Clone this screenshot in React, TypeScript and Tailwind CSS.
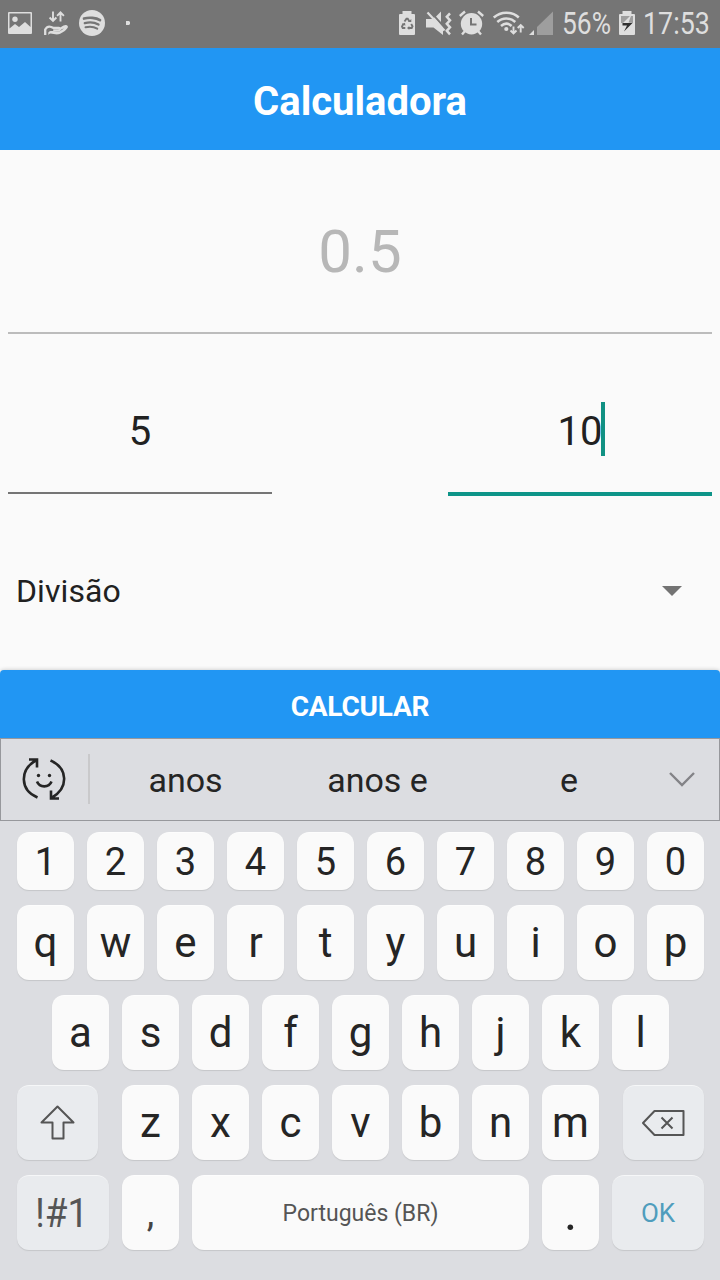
import React from "react";

const NUMBERS = "1234567890".split("");
const TOP = "qwertyuiop".split("");
const HOME = "asdfghjkl".split("");
const BOTTOM = "zxcvbnm".split("");

function Icon({ x, w, className = "", children }: { x: number; w: number; className?: string; children: React.ReactNode }) {
  return (
    <svg width={w} height={28} viewBox={`${x} 10 ${w} 28`} className={`shrink-0 ${className}`} fill="#dedede">
      {children}
    </svg>
  );
}

function StatusBar() {
  return (
    <header className="flex h-12 items-center bg-[#757575] pl-2 text-[#dedede]">
      <Icon x={8} w={24}>
        <path fillRule="evenodd" d="M9 12h22a1 1 0 0 1 1 1v20a1 1 0 0 1-1 1H9a1 1 0 0 1-1-1V13a1 1 0 0 1 1-1zm.5 1.500V28.500l5.500-4.500 4 3 6-5 5.500 5V13.500z" />
        <circle cx="15" cy="19.300" r="2.700" />
      </Icon>
      <Icon x={43} w={26} className="ml-[11px]">
        <g fill="none" stroke="#dedede" strokeWidth="1.900">
          <path d="M53 11.500v9.500M49.600 17.500l3.400 3.500 3.400-3.500M60.500 21.500V13M57.100 15.800l3.400-3.500 3.400 3.500" />
          <path strokeWidth="2.300" d="M45.200 35V29.500c1.500-2.500 4-3.200 6-2.500l2.500 1h5c1.800.3 1.300 2.800-.5 2.700h-5" />
        </g>
        <path d="M58.500 28.500l5-3c3-1.500 5.500.3 4 2.500-2 3-6.500 5.700-9 6.300-3 .5-5.500-.8-8-.8-1 0-1.700.8-2.200 1.500v-2.500c2-2.800 6-1 9.200-.6 2.500-.2 4.500-2.300 6.500-3.700l-4 2z" />
      </Icon>
      <Icon x={79} w={26} className="ml-[10px]">
        <circle cx="92" cy="23" r="13" />
        <g fill="none" stroke="#757575" strokeLinecap="round">
          <path strokeWidth="2.600" d="M84 18.600c5-1.500 12-1 16 1.600" />
          <path strokeWidth="2.300" d="M84.800 23.100c4.500-1.300 10-.7 13.700 1.500" />
          <path strokeWidth="2" d="M85.500 27.300c4-1 8.500-.5 11.700 1.400" />
        </g>
      </Icon>
      <Icon x={126} w={4} className="ml-[21px]">
        <path d="M126 21h3l1 1v2l-1 1h-3z" />
      </Icon>
      <Icon x={399} w={16} className="ml-[269px]">
        <path d="M402.500 11h9v3h2.500a1 1 0 0 1 1 1v19a1 1 0 0 1-1 1h-14a1 1 0 0 1-1-1V15a1 1 0 0 1 1-1h2.500z" />
        <path d="M404.500 21.500l2-2.800h1.200l1.800 2.800M411.200 24l1.300 2.300-.8 1.700h-3M405.300 28h-2.600l-.7-1.500 1.500-2.700" fill="none" stroke="#757575" strokeWidth="1.900" />
        <path fill="#757575" d="M408 22h3.300v-3zM409.300 26v4l-2.300-2zM401.800 24l3.200-1.300.4 3z" />
      </Icon>
      <Icon x={425} w={27} className="ml-[10px]">
        <path d="M426 19h5.500l3-1.500L443 27.500V35l-9.500-7.500H426z" />
        <path d="M436 16.500l5-5V22z" />
        <path d="M427.500 12.500l17 18" stroke="#dedede" strokeWidth="2.200" />
        <path d="M450.500 12.500l-3.200 3.500 3.200 3.500-3.200 3.500 3.200 3.500-3.200 3.500 3.200 3.500" transform="translate(-.5 .8)" fill="none" stroke="#dedede" strokeWidth="2.500" />
      </Icon>
      <Icon x={459} w={25} className="ml-[7px]">
        <circle cx="471.500" cy="23.700" r="10.700" />
        <path d="M459.800 16l5.200-4.500M483.200 16L478 11.500M465 31l-3 3.500M478 31l3 3.500" stroke="#dedede" strokeWidth="2.400" />
        <path d="M471 18v6.500h5.500" fill="none" stroke="#757575" strokeWidth="2" />
      </Icon>
      <Icon x={493} w={32} className="ml-[9px]">
        <g fill="none" stroke="#dedede" strokeWidth="2.500">
          <path d="M493.800 17.500c7-6.500 18-6.500 25 0M497.300 22c5.300-4.800 12.700-4.800 18 0M501 26c3.300-3 7.300-3 10.600 0" />
          <path strokeWidth="1.900" d="M513.500 26.500v7M510.500 30.500l3 3 3-3M520.700 32.500v-7.500M517.700 28l3-3 3 3" />
        </g>
        <circle cx="506.300" cy="29" r="2.100" />
      </Icon>
      <Icon x={529} w={24} className="ml-[4px]">
        <path d="M529 35l5-5v5z" />
        <path fill="#9e9e9e" d="M537 35v-8l16-15.500V35z" />
      </Icon>
      <div className="ml-[9px] w-[54px] origin-left scale-x-[.865] whitespace-nowrap text-[30.500px] leading-[48px]">56%</div>
      <Icon x={619} w={16} className="ml-[3px]">
        <path d="M622.500 11h9v3h2.500a1 1 0 0 1 1 1v19a1 1 0 0 1-1 1h-14a1 1 0 0 1-1-1V15a1 1 0 0 1 1-1h2.500z" />
        <path fill="#9e9e9e" d="M621 16h12v7h-12z" />
        <path d="M630 16l-7 7h9.500l-4-.5 2.500-6.500z" />
        <path fill="#303030" d="M622.500 23h10l-8.500 8.500 3-6h-4.500z" />
      </Icon>
      <div className="ml-[8px] w-[70px] origin-left scale-x-[.88] whitespace-nowrap text-[30.500px] leading-[48px]">17:53</div>
    </header>
  );
}

function Key({ children, className = "w-[57px] bg-[#fafafa] text-[42px] text-[#252525]" }: { children: React.ReactNode; className?: string }) {
  return (
    <button className={`flex h-full shrink-0 items-center justify-center rounded-xl border-t border-white/60 shadow-[0_1px_1px_#c5c6c9] ${className}`}>
      {children}
    </button>
  );
}

function Letters({ keys }: { keys: string[] }) {
  return (
    <>
      {keys.map((k) => (
        <Key key={k}>
          <span className="leading-[76px]">{k}</span>
        </Key>
      ))}
    </>
  );
}

function Keyboard() {
  return (
    <section className="flex h-[542px] flex-col bg-[#dcdde1] text-[#252525]">
      <div className="flex h-[83px] shrink-0 items-center border border-[#97989c] pb-0.5 text-[34px]">
        <svg className="ml-[21px] shrink-0" width="44" height="44" viewBox="22 757 44 44" fill="none" stroke="#252525" strokeWidth="2.600">
          <path d="M37.500 797.500C20 790 19 770 36.500 760M29 759.500h8v8M50.500 760.500C68 768 69 788 51.500 798M59 798.500h-8v-8" />
          <path d="M37 781.500c2.500 6.500 12 6.500 14.500 0" />
          <circle cx="38.500" cy="775.500" r="1.700" fill="#252525" stroke="none" />
          <circle cx="49.500" cy="775.500" r="1.700" fill="#252525" stroke="none" />
        </svg>
        <div className="ml-[22px] h-[50px] w-0.5 shrink-0 bg-[#c9c9cb]" />
        <div className="w-[191px] pt-1 text-center">anos</div>
        <div className="w-[193px] pt-1 text-center">anos e</div>
        <div className="w-[190px] pt-1 text-center">e</div>
        <svg className="ml-[4px] shrink-0" width="28" height="18" viewBox="0 0 28 18" fill="none" stroke="#838387" strokeWidth="2.400">
          <path d="M2 3l12 12L26 3" />
        </svg>
      </div>
      <div className="mt-[11px] flex h-[58px] gap-[13px] pl-[17px]">
        {NUMBERS.map((k) => (
          <Key key={k} className="w-[57px] bg-[#fafafa] pt-0.5 text-[38px] text-[#252525]">
            {k}
          </Key>
        ))}
      </div>
      <div className="mt-[15px] flex h-[75px] gap-[13px] pl-[17px]">
        <Letters keys={TOP} />
      </div>
      <div className="mt-[15px] flex h-[75px] gap-[13px] pl-[52px]">
        <Letters keys={HOME} />
      </div>
      <div className="mt-[15px] flex h-[75px] pl-[17px]">
        <Key className="w-[81px] bg-[#e9ebee]">
          <svg width="36" height="36" viewBox="0 0 36 36" fill="none" stroke="#555" strokeWidth="2" strokeLinejoin="round">
            <path d="M17.500 1.500L33.500 17.500H23.500V33.500H12.500V17.500H1.500z" />
          </svg>
        </Key>
        <div className="ml-6 flex gap-[13px]">
          <Letters keys={BOTTOM} />
        </div>
        <div className="ml-6">
          <Key className="w-[81px] bg-[#e9ebee] pr-0.5">
            <svg width="44" height="28" viewBox="0 0 44 28" fill="none" stroke="#555" strokeWidth="2" strokeLinejoin="round">
              <path d="M2 14L13.500 2h29v24h-29zM20.500 8.500l11 11M31.500 8.500l-11 11" />
            </svg>
          </Key>
        </div>
      </div>
      <div className="mt-[15px] flex h-[75px] gap-[13px] pl-[17px]">
        <Key className="w-[92px] bg-[#e9ebee] pt-0.5 text-[40px] text-[#555]">
          <span className="-ml-0.5 scale-x-[.92]">!#1</span>
        </Key>
        <Key className="w-[57px] bg-[#fafafa] text-[38px] text-[#444]">,</Key>
        <Key className="w-[337px] bg-[#fafafa] pt-0.5 text-[23px] text-[#555]">Português (BR)</Key>
        <Key className="w-[57px] bg-[#fafafa] text-[50px] text-[#252525]">.</Key>
        <Key className="w-[92px] bg-[#e9ebee] text-[26px] text-[#4f9dbd]">OK</Key>
      </div>
    </section>
  );
}

export default function App() {
  return (
    <main className="flex h-[1280px] w-[720px] flex-col overflow-hidden bg-[#fafafa] font-['Roboto',sans-serif] text-[#212121]">
      <StatusBar />
      <h1 className="flex h-[102px] items-center justify-center bg-[#2196f3] pt-1.5 text-[40px] font-bold text-white">Calculadora</h1>
      <div className="mx-2 flex h-[184px] items-center justify-center border-b-2 border-[#bcbcbc] pt-[22px] text-[60px] text-[#b7b7b7]">0.5</div>
      <div className="mx-2 flex h-[162px] justify-between text-[40px]">
        <div className="flex h-[160px] w-[264px] items-center justify-center border-b-2 border-[#757575] pt-[37px]">5</div>
        <div className="flex h-[162px] w-[264px] items-center justify-center border-b-4 border-[#0d9488] pt-[37px]">
          <span>10</span>
          <span className="-mr-[3px] -ml-px mb-1.5 h-[54px] w-1 bg-[#119183]" />
        </div>
      </div>
      <div className="flex h-[174px] items-center justify-between pr-[38px] pl-4 pt-4 text-[32px]">
        <span className="tracking-[.1px]">Divisão</span>
        <svg width="20" height="10" viewBox="0 0 20 10" fill="#737373">
          <path d="M0 0h20L10 10z" />
        </svg>
      </div>
      <button className="h-[68px] shrink-0 rounded-t-[4px] bg-[#2196f3] pt-1.5 text-[28px] font-bold tracking-[-.2px] text-white shadow-[0_0_4px_#00000038]">CALCULAR</button>
      <Keyboard />
    </main>
  );
}
